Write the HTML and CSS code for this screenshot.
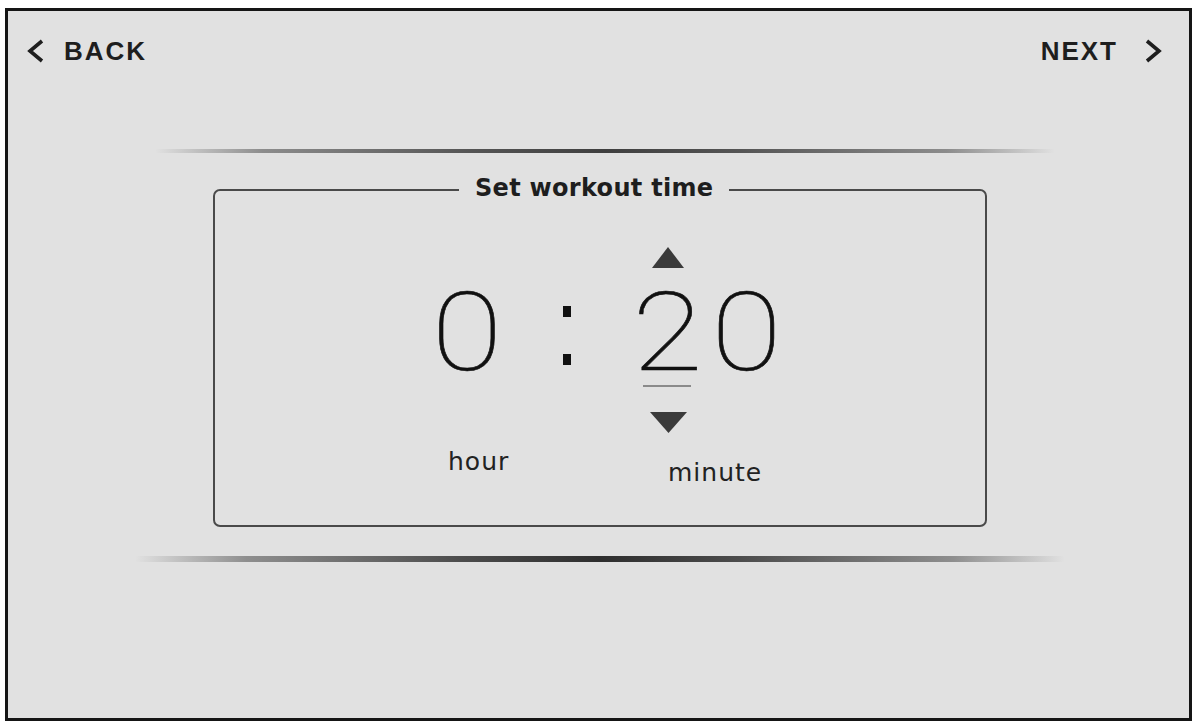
FILE: index.html
```html
<!DOCTYPE html>
<html lang="en">
<head>
<meta charset="utf-8">
<title>Set workout time</title>
<link rel="stylesheet" href="styles.css">
</head>
<body>
<div class="frame">
  <header class="topbar">
    <a class="nav back">
      <svg class="chev" width="18" height="24" viewBox="0 0 18 24"><polyline points="15,2 3,12 15,22" /></svg>
      <span>BACK</span>
    </a>
    <a class="nav next">
      <span>NEXT</span>
      <svg class="chev" width="18" height="24" viewBox="0 0 18 24"><polyline points="3,2 15,12 3,22" /></svg>
    </a>
  </header>
  <div class="rule rule-top"></div>
  <fieldset class="panel">
    <legend>Set workout time</legend>
    <div class="clock">
      <div class="hour-col">
        <div class="digit">0</div>
        <div class="label hour-label">hour</div>
      </div>
      <div class="colon"><span></span><span></span></div>
      <div class="min-col">
        <svg class="arrow up" width="32" height="21" viewBox="0 0 32 21"><polygon points="16,0 32,21 0,21" /></svg>
        <div class="digits"><span class="digit">2</span><span class="digit">0</span></div>
        <div class="cursor"></div>
        <svg class="arrow down" width="37" height="21" viewBox="0 0 37 21"><polygon points="0,0 37,0 18.5,21" /></svg>
        <div class="label minute-label">minute</div>
      </div>
    </div>
  </fieldset>
  <div class="rule rule-bottom"></div>
</div>
</body>
</html>
```
FILE: styles.css
```css
html, body {
  margin: 0;
  padding: 0;
  background: #ffffff;
}

.frame {
  box-sizing: border-box;
  width: 1187px;
  height: 713px;
  margin: 8px 0 0 5px;
  border: 3px solid #151515;
  background: #e1e1e1;
  overflow: hidden;
  font-family: "Liberation Sans", Arial, sans-serif;
  color: #1e1e1e;
}

.topbar {
  height: 80px;
  display: flex;
  align-items: center;
  justify-content: space-between;
  padding: 0 27px 0 19px;
}

.nav {
  display: flex;
  align-items: center;
  font-size: 26px;
  font-weight: bold;
  letter-spacing: 2px;
  color: #1e1e1e;
}

.back span { margin-left: 19px; }
.next span { margin-right: 26px; }

.chev polyline {
  fill: none;
  stroke: #1e1e1e;
  stroke-width: 3.6;
  stroke-linejoin: miter;
  stroke-linecap: butt;
}

.rule {
  border-radius: 3px;
}

.rule-top {
  width: 900px;
  height: 4px;
  margin: 58px 0 0 147px;
  background: linear-gradient(to right,
    rgba(70,70,70,0) 0%,
    rgba(70,70,70,0.55) 12%,
    rgba(60,60,60,0.85) 35%,
    #3f3f3f 50%,
    rgba(60,60,60,0.85) 65%,
    rgba(70,70,70,0.55) 88%,
    rgba(70,70,70,0) 100%);
}

.rule-bottom {
  width: 930px;
  height: 6px;
  margin: 29px 0 0 127px;
  background: linear-gradient(to right,
    rgba(60,60,60,0) 0%,
    rgba(60,60,60,0.5) 12%,
    rgba(50,50,50,0.85) 35%,
    #2e2e2e 50%,
    rgba(50,50,50,0.85) 65%,
    rgba(60,60,60,0.5) 88%,
    rgba(60,60,60,0) 100%);
}

.panel {
  box-sizing: border-box;
  width: 774px;
  margin: 21px 0 0 205px;
  padding: 0 0 37px 0;
  border: 2px solid #4a4a4a;
  border-radius: 7px;
  min-inline-size: 0;
}

.panel legend {
  margin-left: 244px;
  padding: 0 16px 3px;
  font-family: "DejaVu Sans", sans-serif;
  font-weight: bold;
  font-size: 24px;
  line-height: 28px;
  letter-spacing: 0.3px;
  color: #1e1e1e;
}

.clock {
  display: flex;
  align-items: flex-start;
  margin-top: 42px;
  padding-left: 213px;
}

.digit {
  display: inline-block;
  width: 79px;
  text-align: center;
  font-family: Roboto, "Liberation Sans", sans-serif;
  font-weight: 100;
  font-size: 110px;
  line-height: 96px;
  color: #111;
  -webkit-text-stroke: 0.6px #111;
  transform: scaleX(1.17);
}

.hour-col {
  width: 78px;
  margin-top: 38px;
}

.hour-col .digit { width: 78px; }

.label {
  font-family: "DejaVu Sans", sans-serif;
  font-size: 25px;
  line-height: 30px;
  letter-spacing: 1px;
  color: #222;
  white-space: nowrap;
}

.hour-label {
  margin-top: 66px;
  padding-left: 20px;
}

.colon {
  width: 122px;
  height: 96px;
  margin-top: 38px;
  display: flex;
  flex-direction: column;
  align-items: center;
  padding-top: 21px;
  box-sizing: border-box;
  gap: 37px;
}

.colon span {
  display: block;
  width: 8px;
  height: 11px;
  background: #111;
}

.min-col {
  width: 158px;
}

.arrow {
  display: block;
}

.arrow polygon { fill: #3a3a3a; }

.arrow.up { margin-left: 24px; }

.digits {
  display: flex;
  margin-top: 17px;
}

.cursor {
  width: 48px;
  height: 2px;
  margin: 4px 0 0 15px;
  background: #8a8a8a;
}

.arrow.down { margin: 25px 0 0 22px; }

.minute-label {
  margin: 25px 0 0 40px;
}
```
